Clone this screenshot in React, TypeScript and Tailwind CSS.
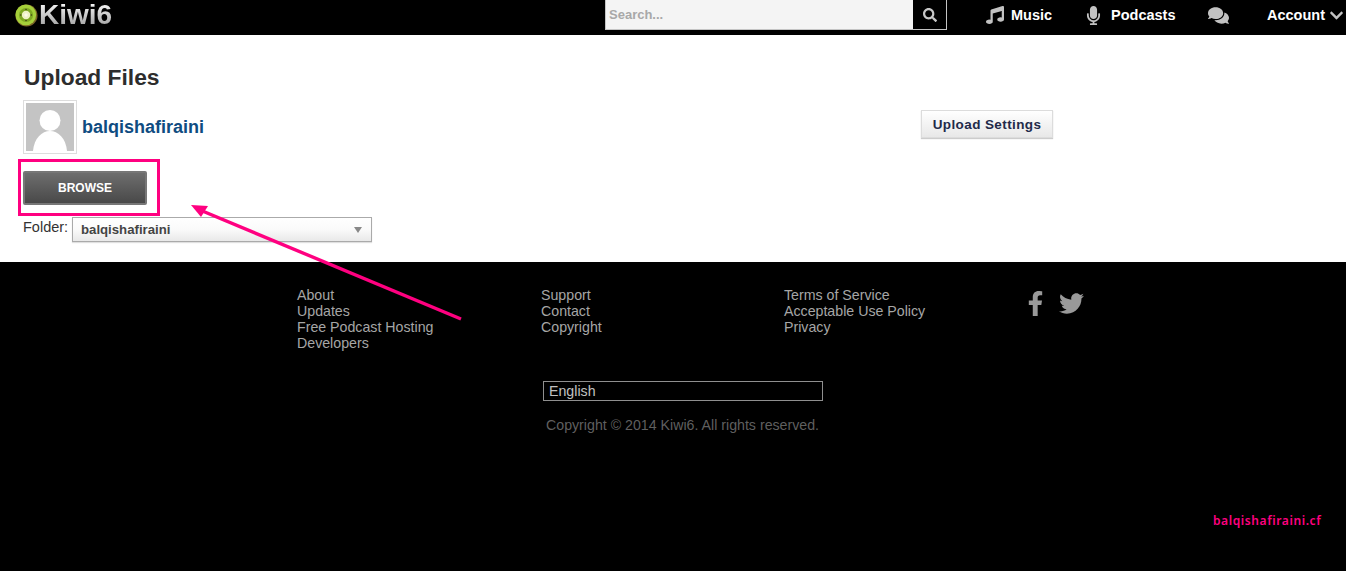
import React from 'react';
import { FaChevronDown, FaComments, FaFacebookF, FaMicrophone, FaMusic, FaSearch, FaTwitter } from 'react-icons/fa';

const footerColumns = [
  { width: 'w-[244px]', links: ['About', 'Updates', 'Free Podcast Hosting', 'Developers'] },
  { width: 'w-[243px]', links: ['Support', 'Contact', 'Copyright'] },
  { width: 'w-[239px]', links: ['Terms of Service', 'Acceptable Use Policy', 'Privacy'] },
];

function KiwiLogo() {
  return (
    <svg width="23" height="23" viewBox="0 0 24 24" className="shrink-0">
      <circle cx="12" cy="12" r="11.5" fill="#7a6426" />
      <circle cx="11.3" cy="11.3" r="10.8" fill="#a5cf3a" />
      <circle cx="11.5" cy="11.5" r="7.4" fill="#7da822" />
      <circle cx="11.5" cy="11.5" r="4.4" fill="#eef2c4" />
      <circle cx="11.5" cy="11.5" r="1.8" fill="#fbfbe8" />
      <circle cx="11.5" cy="5.8" r="0.8" fill="#3a3a14" />
      <circle cx="17" cy="11.5" r="0.8" fill="#3a3a14" />
      <circle cx="11.5" cy="17.2" r="0.8" fill="#3a3a14" />
      <circle cx="6" cy="11.5" r="0.8" fill="#3a3a14" />
    </svg>
  );
}

function Header() {
  return (
    <header className="flex h-[35px] items-start bg-black">
      <div className="ml-[15px] flex h-[30px] w-[590px] items-center gap-[1px]">
        <KiwiLogo />
        <span className="bg-gradient-to-b from-white to-[#9a9a9a] bg-clip-text text-[28px] font-bold leading-none text-transparent">
          Kiwi6
        </span>
      </div>
      <div className="flex h-[30px] w-[342px] border border-[#c4c4c4] border-t-0">
        <div className="flex-1 bg-[#f4f4f4] pl-[3px] text-[13px] font-bold leading-[30px] text-[#a8a8a8]">Search...</div>
        <div className="flex w-[33px] items-center justify-center bg-black text-[#c8c8c8]">
          <FaSearch className="text-[14px]" />
        </div>
      </div>
      <nav className="flex h-[30px] flex-1 items-center text-[14.5px] font-bold text-white">
        <div className="ml-[39px] flex w-[102px] items-center gap-[7px]">
          <FaMusic className="text-[18px] text-[#c2c2c2]" />
          <span className="mt-px">Music</span>
        </div>
        <div className="flex w-[120px] items-center gap-[8px]">
          <FaMicrophone className="-ml-[4px] text-[19px] text-[#c2c2c2]" />
          <span className="mt-px">Podcasts</span>
        </div>
        <FaComments className="text-[21px] text-[#c2c2c2]" />
        <div className="ml-[38px] flex items-center gap-[4px]">
          <span className="mt-px">Account</span>
          <FaChevronDown className="text-[15px] text-[#c2c2c2]" />
        </div>
      </nav>
    </header>
  );
}

function UploadSection() {
  return (
    <main className="h-[227px] bg-white pl-[23px] pt-[29px]">
      <h1 className="ml-px text-[22.8px] font-bold leading-[26px] text-[#2d2d2d]">Upload Files</h1>
      <div className="mt-[10px] flex h-[54px] items-center">
        <div className="h-[54px] w-[54px] border border-[#dddddd] p-[2px]">
          <div className="h-full w-full overflow-hidden bg-[#c4c4c4]">
            <svg viewBox="0 0 48 48" className="h-full w-full">
              <circle cx="24" cy="17.5" r="10.5" fill="#fff" />
              <path d="M7 48 C8 35 16 28 24 28 C32 28 40 35 41 48 Z" fill="#fff" />
            </svg>
          </div>
        </div>
        <a className="ml-[5px] text-[18px] font-bold text-[#0f4c81]">balqishafiraini</a>
        <button className="ml-[717px] -mt-[6px] h-[28px] w-[132px] border border-[#dcdcdc] bg-gradient-to-b from-white to-[#e8e8e8] pt-[2px] text-center text-[13.5px] font-bold tracking-[0.4px] text-[#222a4a] shadow-[0_1px_1px_rgba(0,0,0,0.2)]">
          Upload Settings
        </button>
      </div>
      <button className="mt-[17px] block h-[34px] w-[124px] rounded-[2px] border-2 border-[#777777] bg-gradient-to-b from-[#6e6e6e] to-[#494949] text-[12px] font-bold text-white">
        BROWSE
      </button>
      <div className="mt-[12px] flex items-start">
        <span className="mt-[2px] w-[45px] text-[14.5px] leading-[16px] text-[#333333]">Folder:</span>
        <div className="ml-[4px] flex h-[25px] w-[300px] items-center justify-between border border-[#aaaaaa] bg-gradient-to-b from-white via-[#fafafa] to-[#e9e9e9] pl-[8px] pr-[9px] shadow-[0_1px_1px_rgba(0,0,0,0.12)]">
          <span className="text-[13.2px] font-bold text-[#444444]">balqishafiraini</span>
          <span className="h-0 w-0 border-x-[4px] border-t-[6px] border-x-transparent border-t-[#888888]" />
        </div>
      </div>
    </main>
  );
}

function Footer() {
  return (
    <footer className="relative h-[309px] bg-black pt-[25px] text-[14.2px] leading-4 text-[#a6a6a6]">
      <div className="ml-[297px] flex">
        {footerColumns.map((col) => (
          <ul key={col.links[0]} className={col.width}>
            {col.links.map((link) => (
              <li key={link}>{link}</li>
            ))}
          </ul>
        ))}
        <div className="mt-[4px] flex items-start gap-[11px] text-[#999999]">
          <FaFacebookF className="text-[25px]" />
          <FaTwitter className="text-[25px]" />
        </div>
      </div>
      <div className="ml-[543px] mt-[30px] h-5 w-[280px] border border-[#8f8f8f] pl-[5px] leading-[18px] text-[#c0c0c0]">
        English
      </div>
      <p className="ml-[546px] mt-[16px] leading-4 text-[#5f5f5f]">Copyright © 2014 Kiwi6. All rights reserved.</p>
      <span className="absolute left-[1213px] top-[251px] font-['Noto_Sans',sans-serif] text-[12px] font-semibold leading-4 tracking-[0.6px] text-[#ff0080]">
        balqishafiraini.cf
      </span>
    </footer>
  );
}

export default function App() {
  return (
    <div className="relative h-[571px] w-[1346px] overflow-hidden font-['Liberation_Sans',Arial,sans-serif]">
      <Header />
      <UploadSection />
      <Footer />

      {/* annotation drawn over the page */}
      <div className="pointer-events-none absolute left-[18px] top-[159px] h-[57px] w-[142px] border-[3px] border-[#ff0080]" />
      <svg className="pointer-events-none absolute left-0 top-0" width="1346" height="571">
        <line x1="461" y1="319" x2="200" y2="210" stroke="#ff0080" strokeWidth="3.4" />
        <polygon points="191,205 208,206 201,217" fill="#ff0080" />
      </svg>
    </div>
  );
}
